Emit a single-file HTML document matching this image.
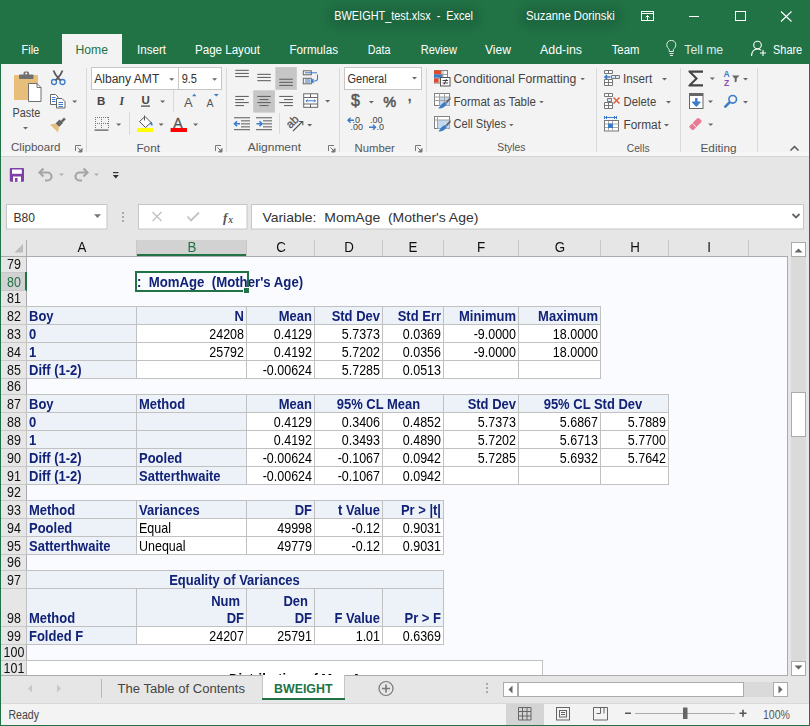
<!DOCTYPE html>
<html><head><meta charset="utf-8"><style>
html,body{margin:0;padding:0;}
body{width:810px;height:726px;position:relative;overflow:hidden;font-family:"Liberation Sans",sans-serif;background:#e6e6e6;}
body>div{position:absolute;box-sizing:content-box;}
.t{white-space:nowrap;line-height:15px;}
svg{position:absolute;left:0;top:0;}
.bg{position:absolute;left:0;top:0;}
</style></head><body>
<div style="left:1px;top:240px;width:787px;height:16px;background:#e6e6e6"></div>
<div style="left:1px;top:256px;width:787px;height:420px;background:#fafbfe"></div>
<div style="left:1px;top:256px;width:25px;height:420px;background:#e6e6e6"></div>
<div style="left:26px;top:240px;width:1px;height:436px;background:#ababab"></div>
<div style="left:1px;top:256px;width:787px;height:1px;background:#ababab"></div>
<div style="left:136px;top:240px;width:1px;height:16px;background:#c8c8c8"></div>
<div style="left:246px;top:240px;width:1px;height:16px;background:#c8c8c8"></div>
<div style="left:314px;top:240px;width:1px;height:16px;background:#c8c8c8"></div>
<div style="left:382px;top:240px;width:1px;height:16px;background:#c8c8c8"></div>
<div style="left:443px;top:240px;width:1px;height:16px;background:#c8c8c8"></div>
<div style="left:518px;top:240px;width:1px;height:16px;background:#c8c8c8"></div>
<div style="left:600px;top:240px;width:1px;height:16px;background:#c8c8c8"></div>
<div style="left:668px;top:240px;width:1px;height:16px;background:#c8c8c8"></div>
<div style="left:748px;top:240px;width:1px;height:16px;background:#c8c8c8"></div>
<div style="left:137px;top:240px;width:109px;height:16px;background:#d2d2d2"></div>
<div style="left:137px;top:254px;width:109px;height:2px;background:#217346"></div>
<div class="t" style="left:51.5px;width:60px;text-align:center;top:240.48px;font-size:14.5px;color:#111;font-weight:normal;transform-origin:50% 0;transform:scaleX(0.92)">A</div>
<div class="t" style="left:161.5px;width:60px;text-align:center;top:240.48px;font-size:14.5px;color:#217346;font-weight:normal;transform-origin:50% 0;transform:scaleX(0.92)">B</div>
<div class="t" style="left:250.5px;width:60px;text-align:center;top:240.48px;font-size:14.5px;color:#111;font-weight:normal;transform-origin:50% 0;transform:scaleX(0.92)">C</div>
<div class="t" style="left:318.5px;width:60px;text-align:center;top:240.48px;font-size:14.5px;color:#111;font-weight:normal;transform-origin:50% 0;transform:scaleX(0.92)">D</div>
<div class="t" style="left:383.0px;width:60px;text-align:center;top:240.48px;font-size:14.5px;color:#111;font-weight:normal;transform-origin:50% 0;transform:scaleX(0.92)">E</div>
<div class="t" style="left:451.0px;width:60px;text-align:center;top:240.48px;font-size:14.5px;color:#111;font-weight:normal;transform-origin:50% 0;transform:scaleX(0.92)">F</div>
<div class="t" style="left:529.5px;width:60px;text-align:center;top:240.48px;font-size:14.5px;color:#111;font-weight:normal;transform-origin:50% 0;transform:scaleX(0.92)">G</div>
<div class="t" style="left:604.5px;width:60px;text-align:center;top:240.48px;font-size:14.5px;color:#111;font-weight:normal;transform-origin:50% 0;transform:scaleX(0.92)">H</div>
<div class="t" style="left:678.5px;width:60px;text-align:center;top:240.48px;font-size:14.5px;color:#111;font-weight:normal;transform-origin:50% 0;transform:scaleX(0.92)">I</div>
<div style="left:1px;top:272px;width:25px;height:1px;background:#c8c8c8"></div>
<div class="t" style="left:-1.3000000000000007px;width:30px;text-align:center;top:256.98px;font-size:14.5px;color:#111;font-weight:normal;transform-origin:50% 0;transform:scaleX(0.86)">79</div>
<div style="left:1px;top:273px;width:25px;height:18px;background:#d2d2d2"></div>
<div style="left:25px;top:272px;width:2px;height:19px;background:#217346"></div>
<div style="left:1px;top:290px;width:25px;height:1px;background:#c8c8c8"></div>
<div class="t" style="left:-1.3000000000000007px;width:30px;text-align:center;top:274.98px;font-size:14.5px;color:#217346;font-weight:normal;transform-origin:50% 0;transform:scaleX(0.86)">80</div>
<div style="left:1px;top:306px;width:25px;height:1px;background:#c8c8c8"></div>
<div class="t" style="left:-1.3000000000000007px;width:30px;text-align:center;top:290.98px;font-size:14.5px;color:#111;font-weight:normal;transform-origin:50% 0;transform:scaleX(0.86)">81</div>
<div style="left:1px;top:324px;width:25px;height:1px;background:#c8c8c8"></div>
<div class="t" style="left:-1.3000000000000007px;width:30px;text-align:center;top:308.98px;font-size:14.5px;color:#111;font-weight:normal;transform-origin:50% 0;transform:scaleX(0.86)">82</div>
<div style="left:1px;top:342px;width:25px;height:1px;background:#c8c8c8"></div>
<div class="t" style="left:-1.3000000000000007px;width:30px;text-align:center;top:326.98px;font-size:14.5px;color:#111;font-weight:normal;transform-origin:50% 0;transform:scaleX(0.86)">83</div>
<div style="left:1px;top:360px;width:25px;height:1px;background:#c8c8c8"></div>
<div class="t" style="left:-1.3000000000000007px;width:30px;text-align:center;top:344.98px;font-size:14.5px;color:#111;font-weight:normal;transform-origin:50% 0;transform:scaleX(0.86)">84</div>
<div style="left:1px;top:378px;width:25px;height:1px;background:#c8c8c8"></div>
<div class="t" style="left:-1.3000000000000007px;width:30px;text-align:center;top:362.98px;font-size:14.5px;color:#111;font-weight:normal;transform-origin:50% 0;transform:scaleX(0.86)">85</div>
<div style="left:1px;top:394px;width:25px;height:1px;background:#c8c8c8"></div>
<div class="t" style="left:-1.3000000000000007px;width:30px;text-align:center;top:378.98px;font-size:14.5px;color:#111;font-weight:normal;transform-origin:50% 0;transform:scaleX(0.86)">86</div>
<div style="left:1px;top:412px;width:25px;height:1px;background:#c8c8c8"></div>
<div class="t" style="left:-1.3000000000000007px;width:30px;text-align:center;top:396.98px;font-size:14.5px;color:#111;font-weight:normal;transform-origin:50% 0;transform:scaleX(0.86)">87</div>
<div style="left:1px;top:430px;width:25px;height:1px;background:#c8c8c8"></div>
<div class="t" style="left:-1.3000000000000007px;width:30px;text-align:center;top:414.98px;font-size:14.5px;color:#111;font-weight:normal;transform-origin:50% 0;transform:scaleX(0.86)">88</div>
<div style="left:1px;top:448px;width:25px;height:1px;background:#c8c8c8"></div>
<div class="t" style="left:-1.3000000000000007px;width:30px;text-align:center;top:432.98px;font-size:14.5px;color:#111;font-weight:normal;transform-origin:50% 0;transform:scaleX(0.86)">89</div>
<div style="left:1px;top:466px;width:25px;height:1px;background:#c8c8c8"></div>
<div class="t" style="left:-1.3000000000000007px;width:30px;text-align:center;top:450.98px;font-size:14.5px;color:#111;font-weight:normal;transform-origin:50% 0;transform:scaleX(0.86)">90</div>
<div style="left:1px;top:484px;width:25px;height:1px;background:#c8c8c8"></div>
<div class="t" style="left:-1.3000000000000007px;width:30px;text-align:center;top:468.98px;font-size:14.5px;color:#111;font-weight:normal;transform-origin:50% 0;transform:scaleX(0.86)">91</div>
<div style="left:1px;top:500px;width:25px;height:1px;background:#c8c8c8"></div>
<div class="t" style="left:-1.3000000000000007px;width:30px;text-align:center;top:484.98px;font-size:14.5px;color:#111;font-weight:normal;transform-origin:50% 0;transform:scaleX(0.86)">92</div>
<div style="left:1px;top:518px;width:25px;height:1px;background:#c8c8c8"></div>
<div class="t" style="left:-1.3000000000000007px;width:30px;text-align:center;top:502.98px;font-size:14.5px;color:#111;font-weight:normal;transform-origin:50% 0;transform:scaleX(0.86)">93</div>
<div style="left:1px;top:536px;width:25px;height:1px;background:#c8c8c8"></div>
<div class="t" style="left:-1.3000000000000007px;width:30px;text-align:center;top:520.98px;font-size:14.5px;color:#111;font-weight:normal;transform-origin:50% 0;transform:scaleX(0.86)">94</div>
<div style="left:1px;top:554px;width:25px;height:1px;background:#c8c8c8"></div>
<div class="t" style="left:-1.3000000000000007px;width:30px;text-align:center;top:538.98px;font-size:14.5px;color:#111;font-weight:normal;transform-origin:50% 0;transform:scaleX(0.86)">95</div>
<div style="left:1px;top:570px;width:25px;height:1px;background:#c8c8c8"></div>
<div class="t" style="left:-1.3000000000000007px;width:30px;text-align:center;top:554.98px;font-size:14.5px;color:#111;font-weight:normal;transform-origin:50% 0;transform:scaleX(0.86)">96</div>
<div style="left:1px;top:588px;width:25px;height:1px;background:#c8c8c8"></div>
<div class="t" style="left:-1.3000000000000007px;width:30px;text-align:center;top:572.98px;font-size:14.5px;color:#111;font-weight:normal;transform-origin:50% 0;transform:scaleX(0.86)">97</div>
<div style="left:1px;top:626px;width:25px;height:1px;background:#c8c8c8"></div>
<div class="t" style="left:-1.3000000000000007px;width:30px;text-align:center;top:610.98px;font-size:14.5px;color:#111;font-weight:normal;transform-origin:50% 0;transform:scaleX(0.86)">98</div>
<div style="left:1px;top:644px;width:25px;height:1px;background:#c8c8c8"></div>
<div class="t" style="left:-1.3000000000000007px;width:30px;text-align:center;top:628.98px;font-size:14.5px;color:#111;font-weight:normal;transform-origin:50% 0;transform:scaleX(0.86)">99</div>
<div style="left:1px;top:660px;width:25px;height:1px;background:#c8c8c8"></div>
<div class="t" style="left:-1.3000000000000007px;width:30px;text-align:center;top:644.98px;font-size:14.5px;color:#111;font-weight:normal;transform-origin:50% 0;transform:scaleX(0.86)">100</div>
<div style="left:1px;top:676px;width:25px;height:1px;background:#c8c8c8"></div>
<div class="t" style="left:-1.3000000000000007px;width:30px;text-align:center;top:660.98px;font-size:14.5px;color:#111;font-weight:normal;transform-origin:50% 0;transform:scaleX(0.86)">101</div>
<div style="left:26px;top:306px;width:109px;height:17px;background:#edf2f9;border:1px solid #c1c1c1"></div>
<div class="t" style="left:29px;top:308.58px;font-size:14.2px;color:#112277;font-weight:bold;transform-origin:0 0;transform:scaleX(0.9154929577464789)">Boy</div>
<div style="left:136px;top:306px;width:109px;height:17px;background:#edf2f9;border:1px solid #c1c1c1"></div>
<div class="t" style="left:134px;width:110px;text-align:right;top:308.58px;font-size:14.2px;color:#112277;font-weight:bold;transform-origin:100% 0;transform:scaleX(0.9154929577464789)">N</div>
<div style="left:246px;top:306px;width:67px;height:17px;background:#edf2f9;border:1px solid #c1c1c1"></div>
<div class="t" style="left:244px;width:68px;text-align:right;top:308.58px;font-size:14.2px;color:#112277;font-weight:bold;transform-origin:100% 0;transform:scaleX(0.9154929577464789)">Mean</div>
<div style="left:314px;top:306px;width:67px;height:17px;background:#edf2f9;border:1px solid #c1c1c1"></div>
<div class="t" style="left:312px;width:68px;text-align:right;top:308.58px;font-size:14.2px;color:#112277;font-weight:bold;transform-origin:100% 0;transform:scaleX(0.9154929577464789)">Std Dev</div>
<div style="left:382px;top:306px;width:60px;height:17px;background:#edf2f9;border:1px solid #c1c1c1"></div>
<div class="t" style="left:380px;width:61px;text-align:right;top:308.58px;font-size:14.2px;color:#112277;font-weight:bold;transform-origin:100% 0;transform:scaleX(0.9154929577464789)">Std Err</div>
<div style="left:443px;top:306px;width:74px;height:17px;background:#edf2f9;border:1px solid #c1c1c1"></div>
<div class="t" style="left:441px;width:75px;text-align:right;top:308.58px;font-size:14.2px;color:#112277;font-weight:bold;transform-origin:100% 0;transform:scaleX(0.9154929577464789)">Minimum</div>
<div style="left:518px;top:306px;width:81px;height:17px;background:#edf2f9;border:1px solid #c1c1c1"></div>
<div class="t" style="left:516px;width:82px;text-align:right;top:308.58px;font-size:14.2px;color:#112277;font-weight:bold;transform-origin:100% 0;transform:scaleX(0.9154929577464789)">Maximum</div>
<div style="left:26px;top:324px;width:109px;height:17px;background:#edf2f9;border:1px solid #c1c1c1"></div>
<div class="t" style="left:29px;top:326.58px;font-size:14.2px;color:#112277;font-weight:bold;transform-origin:0 0;transform:scaleX(0.9154929577464789)">0</div>
<div style="left:136px;top:324px;width:109px;height:17px;background:#fff;border:1px solid #c1c1c1"></div>
<div class="t" style="left:134px;width:110px;text-align:right;top:326.58px;font-size:14.2px;color:#000;font-weight:normal;transform-origin:100% 0;transform:scaleX(0.8802816901408451)">24208</div>
<div style="left:246px;top:324px;width:67px;height:17px;background:#fff;border:1px solid #c1c1c1"></div>
<div class="t" style="left:244px;width:68px;text-align:right;top:326.58px;font-size:14.2px;color:#000;font-weight:normal;transform-origin:100% 0;transform:scaleX(0.8802816901408451)">0.4129</div>
<div style="left:314px;top:324px;width:67px;height:17px;background:#fff;border:1px solid #c1c1c1"></div>
<div class="t" style="left:312px;width:68px;text-align:right;top:326.58px;font-size:14.2px;color:#000;font-weight:normal;transform-origin:100% 0;transform:scaleX(0.8802816901408451)">5.7373</div>
<div style="left:382px;top:324px;width:60px;height:17px;background:#fff;border:1px solid #c1c1c1"></div>
<div class="t" style="left:380px;width:61px;text-align:right;top:326.58px;font-size:14.2px;color:#000;font-weight:normal;transform-origin:100% 0;transform:scaleX(0.8802816901408451)">0.0369</div>
<div style="left:443px;top:324px;width:74px;height:17px;background:#fff;border:1px solid #c1c1c1"></div>
<div class="t" style="left:441px;width:75px;text-align:right;top:326.58px;font-size:14.2px;color:#000;font-weight:normal;transform-origin:100% 0;transform:scaleX(0.8802816901408451)">-9.0000</div>
<div style="left:518px;top:324px;width:81px;height:17px;background:#fff;border:1px solid #c1c1c1"></div>
<div class="t" style="left:516px;width:82px;text-align:right;top:326.58px;font-size:14.2px;color:#000;font-weight:normal;transform-origin:100% 0;transform:scaleX(0.8802816901408451)">18.0000</div>
<div style="left:26px;top:342px;width:109px;height:17px;background:#edf2f9;border:1px solid #c1c1c1"></div>
<div class="t" style="left:29px;top:344.58px;font-size:14.2px;color:#112277;font-weight:bold;transform-origin:0 0;transform:scaleX(0.9154929577464789)">1</div>
<div style="left:136px;top:342px;width:109px;height:17px;background:#fff;border:1px solid #c1c1c1"></div>
<div class="t" style="left:134px;width:110px;text-align:right;top:344.58px;font-size:14.2px;color:#000;font-weight:normal;transform-origin:100% 0;transform:scaleX(0.8802816901408451)">25792</div>
<div style="left:246px;top:342px;width:67px;height:17px;background:#fff;border:1px solid #c1c1c1"></div>
<div class="t" style="left:244px;width:68px;text-align:right;top:344.58px;font-size:14.2px;color:#000;font-weight:normal;transform-origin:100% 0;transform:scaleX(0.8802816901408451)">0.4192</div>
<div style="left:314px;top:342px;width:67px;height:17px;background:#fff;border:1px solid #c1c1c1"></div>
<div class="t" style="left:312px;width:68px;text-align:right;top:344.58px;font-size:14.2px;color:#000;font-weight:normal;transform-origin:100% 0;transform:scaleX(0.8802816901408451)">5.7202</div>
<div style="left:382px;top:342px;width:60px;height:17px;background:#fff;border:1px solid #c1c1c1"></div>
<div class="t" style="left:380px;width:61px;text-align:right;top:344.58px;font-size:14.2px;color:#000;font-weight:normal;transform-origin:100% 0;transform:scaleX(0.8802816901408451)">0.0356</div>
<div style="left:443px;top:342px;width:74px;height:17px;background:#fff;border:1px solid #c1c1c1"></div>
<div class="t" style="left:441px;width:75px;text-align:right;top:344.58px;font-size:14.2px;color:#000;font-weight:normal;transform-origin:100% 0;transform:scaleX(0.8802816901408451)">-9.0000</div>
<div style="left:518px;top:342px;width:81px;height:17px;background:#fff;border:1px solid #c1c1c1"></div>
<div class="t" style="left:516px;width:82px;text-align:right;top:344.58px;font-size:14.2px;color:#000;font-weight:normal;transform-origin:100% 0;transform:scaleX(0.8802816901408451)">18.0000</div>
<div style="left:26px;top:360px;width:109px;height:17px;background:#edf2f9;border:1px solid #c1c1c1"></div>
<div class="t" style="left:29px;top:362.58px;font-size:14.2px;color:#112277;font-weight:bold;transform-origin:0 0;transform:scaleX(0.9154929577464789)">Diff (1-2)</div>
<div style="left:136px;top:360px;width:109px;height:17px;background:#fff;border:1px solid #c1c1c1"></div>
<div style="left:246px;top:360px;width:67px;height:17px;background:#fff;border:1px solid #c1c1c1"></div>
<div class="t" style="left:244px;width:68px;text-align:right;top:362.58px;font-size:14.2px;color:#000;font-weight:normal;transform-origin:100% 0;transform:scaleX(0.8802816901408451)">-0.00624</div>
<div style="left:314px;top:360px;width:67px;height:17px;background:#fff;border:1px solid #c1c1c1"></div>
<div class="t" style="left:312px;width:68px;text-align:right;top:362.58px;font-size:14.2px;color:#000;font-weight:normal;transform-origin:100% 0;transform:scaleX(0.8802816901408451)">5.7285</div>
<div style="left:382px;top:360px;width:60px;height:17px;background:#fff;border:1px solid #c1c1c1"></div>
<div class="t" style="left:380px;width:61px;text-align:right;top:362.58px;font-size:14.2px;color:#000;font-weight:normal;transform-origin:100% 0;transform:scaleX(0.8802816901408451)">0.0513</div>
<div style="left:443px;top:360px;width:74px;height:17px;background:#fff;border:1px solid #c1c1c1"></div>
<div style="left:518px;top:360px;width:81px;height:17px;background:#fff;border:1px solid #c1c1c1"></div>
<div style="left:26px;top:394px;width:109px;height:17px;background:#edf2f9;border:1px solid #c1c1c1"></div>
<div class="t" style="left:29px;top:396.58px;font-size:14.2px;color:#112277;font-weight:bold;transform-origin:0 0;transform:scaleX(0.9154929577464789)">Boy</div>
<div style="left:136px;top:394px;width:109px;height:17px;background:#edf2f9;border:1px solid #c1c1c1"></div>
<div class="t" style="left:139px;top:396.58px;font-size:14.2px;color:#112277;font-weight:bold;transform-origin:0 0;transform:scaleX(0.9154929577464789)">Method</div>
<div style="left:246px;top:394px;width:67px;height:17px;background:#edf2f9;border:1px solid #c1c1c1"></div>
<div class="t" style="left:244px;width:68px;text-align:right;top:396.58px;font-size:14.2px;color:#112277;font-weight:bold;transform-origin:100% 0;transform:scaleX(0.9154929577464789)">Mean</div>
<div style="left:314px;top:394px;width:128px;height:17px;background:#edf2f9;border:1px solid #c1c1c1"></div>
<div class="t" style="left:314.0px;width:129px;text-align:center;top:396.58px;font-size:14.2px;color:#112277;font-weight:bold;transform-origin:50% 0;transform:scaleX(0.9154929577464789)">95% CL Mean</div>
<div style="left:443px;top:394px;width:74px;height:17px;background:#edf2f9;border:1px solid #c1c1c1"></div>
<div class="t" style="left:441px;width:75px;text-align:right;top:396.58px;font-size:14.2px;color:#112277;font-weight:bold;transform-origin:100% 0;transform:scaleX(0.9154929577464789)">Std Dev</div>
<div style="left:518px;top:394px;width:149px;height:17px;background:#edf2f9;border:1px solid #c1c1c1"></div>
<div class="t" style="left:518.0px;width:150px;text-align:center;top:396.58px;font-size:14.2px;color:#112277;font-weight:bold;transform-origin:50% 0;transform:scaleX(0.9154929577464789)">95% CL Std Dev</div>
<div style="left:26px;top:412px;width:109px;height:17px;background:#edf2f9;border:1px solid #c1c1c1"></div>
<div class="t" style="left:29px;top:414.58px;font-size:14.2px;color:#112277;font-weight:bold;transform-origin:0 0;transform:scaleX(0.9154929577464789)">0</div>
<div style="left:136px;top:412px;width:109px;height:17px;background:#edf2f9;border:1px solid #c1c1c1"></div>
<div style="left:246px;top:412px;width:67px;height:17px;background:#fff;border:1px solid #c1c1c1"></div>
<div class="t" style="left:244px;width:68px;text-align:right;top:414.58px;font-size:14.2px;color:#000;font-weight:normal;transform-origin:100% 0;transform:scaleX(0.8802816901408451)">0.4129</div>
<div style="left:314px;top:412px;width:67px;height:17px;background:#fff;border:1px solid #c1c1c1"></div>
<div class="t" style="left:312px;width:68px;text-align:right;top:414.58px;font-size:14.2px;color:#000;font-weight:normal;transform-origin:100% 0;transform:scaleX(0.8802816901408451)">0.3406</div>
<div style="left:382px;top:412px;width:60px;height:17px;background:#fff;border:1px solid #c1c1c1"></div>
<div class="t" style="left:380px;width:61px;text-align:right;top:414.58px;font-size:14.2px;color:#000;font-weight:normal;transform-origin:100% 0;transform:scaleX(0.8802816901408451)">0.4852</div>
<div style="left:443px;top:412px;width:74px;height:17px;background:#fff;border:1px solid #c1c1c1"></div>
<div class="t" style="left:441px;width:75px;text-align:right;top:414.58px;font-size:14.2px;color:#000;font-weight:normal;transform-origin:100% 0;transform:scaleX(0.8802816901408451)">5.7373</div>
<div style="left:518px;top:412px;width:81px;height:17px;background:#fff;border:1px solid #c1c1c1"></div>
<div class="t" style="left:516px;width:82px;text-align:right;top:414.58px;font-size:14.2px;color:#000;font-weight:normal;transform-origin:100% 0;transform:scaleX(0.8802816901408451)">5.6867</div>
<div style="left:600px;top:412px;width:67px;height:17px;background:#fff;border:1px solid #c1c1c1"></div>
<div class="t" style="left:598px;width:68px;text-align:right;top:414.58px;font-size:14.2px;color:#000;font-weight:normal;transform-origin:100% 0;transform:scaleX(0.8802816901408451)">5.7889</div>
<div style="left:26px;top:430px;width:109px;height:17px;background:#edf2f9;border:1px solid #c1c1c1"></div>
<div class="t" style="left:29px;top:432.58px;font-size:14.2px;color:#112277;font-weight:bold;transform-origin:0 0;transform:scaleX(0.9154929577464789)">1</div>
<div style="left:136px;top:430px;width:109px;height:17px;background:#edf2f9;border:1px solid #c1c1c1"></div>
<div style="left:246px;top:430px;width:67px;height:17px;background:#fff;border:1px solid #c1c1c1"></div>
<div class="t" style="left:244px;width:68px;text-align:right;top:432.58px;font-size:14.2px;color:#000;font-weight:normal;transform-origin:100% 0;transform:scaleX(0.8802816901408451)">0.4192</div>
<div style="left:314px;top:430px;width:67px;height:17px;background:#fff;border:1px solid #c1c1c1"></div>
<div class="t" style="left:312px;width:68px;text-align:right;top:432.58px;font-size:14.2px;color:#000;font-weight:normal;transform-origin:100% 0;transform:scaleX(0.8802816901408451)">0.3493</div>
<div style="left:382px;top:430px;width:60px;height:17px;background:#fff;border:1px solid #c1c1c1"></div>
<div class="t" style="left:380px;width:61px;text-align:right;top:432.58px;font-size:14.2px;color:#000;font-weight:normal;transform-origin:100% 0;transform:scaleX(0.8802816901408451)">0.4890</div>
<div style="left:443px;top:430px;width:74px;height:17px;background:#fff;border:1px solid #c1c1c1"></div>
<div class="t" style="left:441px;width:75px;text-align:right;top:432.58px;font-size:14.2px;color:#000;font-weight:normal;transform-origin:100% 0;transform:scaleX(0.8802816901408451)">5.7202</div>
<div style="left:518px;top:430px;width:81px;height:17px;background:#fff;border:1px solid #c1c1c1"></div>
<div class="t" style="left:516px;width:82px;text-align:right;top:432.58px;font-size:14.2px;color:#000;font-weight:normal;transform-origin:100% 0;transform:scaleX(0.8802816901408451)">5.6713</div>
<div style="left:600px;top:430px;width:67px;height:17px;background:#fff;border:1px solid #c1c1c1"></div>
<div class="t" style="left:598px;width:68px;text-align:right;top:432.58px;font-size:14.2px;color:#000;font-weight:normal;transform-origin:100% 0;transform:scaleX(0.8802816901408451)">5.7700</div>
<div style="left:26px;top:448px;width:109px;height:17px;background:#edf2f9;border:1px solid #c1c1c1"></div>
<div class="t" style="left:29px;top:450.58px;font-size:14.2px;color:#112277;font-weight:bold;transform-origin:0 0;transform:scaleX(0.9154929577464789)">Diff (1-2)</div>
<div style="left:136px;top:448px;width:109px;height:17px;background:#edf2f9;border:1px solid #c1c1c1"></div>
<div class="t" style="left:139px;top:450.58px;font-size:14.2px;color:#112277;font-weight:bold;transform-origin:0 0;transform:scaleX(0.9154929577464789)">Pooled</div>
<div style="left:246px;top:448px;width:67px;height:17px;background:#fff;border:1px solid #c1c1c1"></div>
<div class="t" style="left:244px;width:68px;text-align:right;top:450.58px;font-size:14.2px;color:#000;font-weight:normal;transform-origin:100% 0;transform:scaleX(0.8802816901408451)">-0.00624</div>
<div style="left:314px;top:448px;width:67px;height:17px;background:#fff;border:1px solid #c1c1c1"></div>
<div class="t" style="left:312px;width:68px;text-align:right;top:450.58px;font-size:14.2px;color:#000;font-weight:normal;transform-origin:100% 0;transform:scaleX(0.8802816901408451)">-0.1067</div>
<div style="left:382px;top:448px;width:60px;height:17px;background:#fff;border:1px solid #c1c1c1"></div>
<div class="t" style="left:380px;width:61px;text-align:right;top:450.58px;font-size:14.2px;color:#000;font-weight:normal;transform-origin:100% 0;transform:scaleX(0.8802816901408451)">0.0942</div>
<div style="left:443px;top:448px;width:74px;height:17px;background:#fff;border:1px solid #c1c1c1"></div>
<div class="t" style="left:441px;width:75px;text-align:right;top:450.58px;font-size:14.2px;color:#000;font-weight:normal;transform-origin:100% 0;transform:scaleX(0.8802816901408451)">5.7285</div>
<div style="left:518px;top:448px;width:81px;height:17px;background:#fff;border:1px solid #c1c1c1"></div>
<div class="t" style="left:516px;width:82px;text-align:right;top:450.58px;font-size:14.2px;color:#000;font-weight:normal;transform-origin:100% 0;transform:scaleX(0.8802816901408451)">5.6932</div>
<div style="left:600px;top:448px;width:67px;height:17px;background:#fff;border:1px solid #c1c1c1"></div>
<div class="t" style="left:598px;width:68px;text-align:right;top:450.58px;font-size:14.2px;color:#000;font-weight:normal;transform-origin:100% 0;transform:scaleX(0.8802816901408451)">5.7642</div>
<div style="left:26px;top:466px;width:109px;height:17px;background:#edf2f9;border:1px solid #c1c1c1"></div>
<div class="t" style="left:29px;top:468.58px;font-size:14.2px;color:#112277;font-weight:bold;transform-origin:0 0;transform:scaleX(0.9154929577464789)">Diff (1-2)</div>
<div style="left:136px;top:466px;width:109px;height:17px;background:#edf2f9;border:1px solid #c1c1c1"></div>
<div class="t" style="left:139px;top:468.58px;font-size:14.2px;color:#112277;font-weight:bold;transform-origin:0 0;transform:scaleX(0.9154929577464789)">Satterthwaite</div>
<div style="left:246px;top:466px;width:67px;height:17px;background:#fff;border:1px solid #c1c1c1"></div>
<div class="t" style="left:244px;width:68px;text-align:right;top:468.58px;font-size:14.2px;color:#000;font-weight:normal;transform-origin:100% 0;transform:scaleX(0.8802816901408451)">-0.00624</div>
<div style="left:314px;top:466px;width:67px;height:17px;background:#fff;border:1px solid #c1c1c1"></div>
<div class="t" style="left:312px;width:68px;text-align:right;top:468.58px;font-size:14.2px;color:#000;font-weight:normal;transform-origin:100% 0;transform:scaleX(0.8802816901408451)">-0.1067</div>
<div style="left:382px;top:466px;width:60px;height:17px;background:#fff;border:1px solid #c1c1c1"></div>
<div class="t" style="left:380px;width:61px;text-align:right;top:468.58px;font-size:14.2px;color:#000;font-weight:normal;transform-origin:100% 0;transform:scaleX(0.8802816901408451)">0.0942</div>
<div style="left:443px;top:466px;width:74px;height:17px;background:#fff;border:1px solid #c1c1c1"></div>
<div style="left:518px;top:466px;width:81px;height:17px;background:#fff;border:1px solid #c1c1c1"></div>
<div style="left:600px;top:466px;width:67px;height:17px;background:#fff;border:1px solid #c1c1c1"></div>
<div style="left:26px;top:500px;width:109px;height:17px;background:#edf2f9;border:1px solid #c1c1c1"></div>
<div class="t" style="left:29px;top:502.58px;font-size:14.2px;color:#112277;font-weight:bold;transform-origin:0 0;transform:scaleX(0.9154929577464789)">Method</div>
<div style="left:136px;top:500px;width:109px;height:17px;background:#edf2f9;border:1px solid #c1c1c1"></div>
<div class="t" style="left:139px;top:502.58px;font-size:14.2px;color:#112277;font-weight:bold;transform-origin:0 0;transform:scaleX(0.9154929577464789)">Variances</div>
<div style="left:246px;top:500px;width:67px;height:17px;background:#edf2f9;border:1px solid #c1c1c1"></div>
<div class="t" style="left:244px;width:68px;text-align:right;top:502.58px;font-size:14.2px;color:#112277;font-weight:bold;transform-origin:100% 0;transform:scaleX(0.9154929577464789)">DF</div>
<div style="left:314px;top:500px;width:67px;height:17px;background:#edf2f9;border:1px solid #c1c1c1"></div>
<div class="t" style="left:312px;width:68px;text-align:right;top:502.58px;font-size:14.2px;color:#112277;font-weight:bold;transform-origin:100% 0;transform:scaleX(0.9154929577464789)">t Value</div>
<div style="left:382px;top:500px;width:60px;height:17px;background:#edf2f9;border:1px solid #c1c1c1"></div>
<div class="t" style="left:380px;width:61px;text-align:right;top:502.58px;font-size:14.2px;color:#112277;font-weight:bold;transform-origin:100% 0;transform:scaleX(0.9154929577464789)">Pr &gt; |t|</div>
<div style="left:26px;top:518px;width:109px;height:17px;background:#edf2f9;border:1px solid #c1c1c1"></div>
<div class="t" style="left:29px;top:520.58px;font-size:14.2px;color:#112277;font-weight:bold;transform-origin:0 0;transform:scaleX(0.9154929577464789)">Pooled</div>
<div style="left:136px;top:518px;width:109px;height:17px;background:#fff;border:1px solid #c1c1c1"></div>
<div class="t" style="left:139px;top:520.58px;font-size:14.2px;color:#000;font-weight:normal;transform-origin:0 0;transform:scaleX(0.8802816901408451)">Equal</div>
<div style="left:246px;top:518px;width:67px;height:17px;background:#fff;border:1px solid #c1c1c1"></div>
<div class="t" style="left:244px;width:68px;text-align:right;top:520.58px;font-size:14.2px;color:#000;font-weight:normal;transform-origin:100% 0;transform:scaleX(0.8802816901408451)">49998</div>
<div style="left:314px;top:518px;width:67px;height:17px;background:#fff;border:1px solid #c1c1c1"></div>
<div class="t" style="left:312px;width:68px;text-align:right;top:520.58px;font-size:14.2px;color:#000;font-weight:normal;transform-origin:100% 0;transform:scaleX(0.8802816901408451)">-0.12</div>
<div style="left:382px;top:518px;width:60px;height:17px;background:#fff;border:1px solid #c1c1c1"></div>
<div class="t" style="left:380px;width:61px;text-align:right;top:520.58px;font-size:14.2px;color:#000;font-weight:normal;transform-origin:100% 0;transform:scaleX(0.8802816901408451)">0.9031</div>
<div style="left:26px;top:536px;width:109px;height:17px;background:#edf2f9;border:1px solid #c1c1c1"></div>
<div class="t" style="left:29px;top:538.58px;font-size:14.2px;color:#112277;font-weight:bold;transform-origin:0 0;transform:scaleX(0.9154929577464789)">Satterthwaite</div>
<div style="left:136px;top:536px;width:109px;height:17px;background:#fff;border:1px solid #c1c1c1"></div>
<div class="t" style="left:139px;top:538.58px;font-size:14.2px;color:#000;font-weight:normal;transform-origin:0 0;transform:scaleX(0.8802816901408451)">Unequal</div>
<div style="left:246px;top:536px;width:67px;height:17px;background:#fff;border:1px solid #c1c1c1"></div>
<div class="t" style="left:244px;width:68px;text-align:right;top:538.58px;font-size:14.2px;color:#000;font-weight:normal;transform-origin:100% 0;transform:scaleX(0.8802816901408451)">49779</div>
<div style="left:314px;top:536px;width:67px;height:17px;background:#fff;border:1px solid #c1c1c1"></div>
<div class="t" style="left:312px;width:68px;text-align:right;top:538.58px;font-size:14.2px;color:#000;font-weight:normal;transform-origin:100% 0;transform:scaleX(0.8802816901408451)">-0.12</div>
<div style="left:382px;top:536px;width:60px;height:17px;background:#fff;border:1px solid #c1c1c1"></div>
<div class="t" style="left:380px;width:61px;text-align:right;top:538.58px;font-size:14.2px;color:#000;font-weight:normal;transform-origin:100% 0;transform:scaleX(0.8802816901408451)">0.9031</div>
<div style="left:26px;top:570px;width:416px;height:17px;background:#edf2f9;border:1px solid #c1c1c1"></div>
<div class="t" style="left:26.0px;width:417px;text-align:center;top:572.58px;font-size:14.2px;color:#112277;font-weight:bold;transform-origin:50% 0;transform:scaleX(0.9154929577464789)">Equality of Variances</div>
<div style="left:26px;top:588px;width:109px;height:37px;background:#edf2f9;border:1px solid #c1c1c1"></div>
<div class="t" style="left:29px;top:610.58px;font-size:14.2px;color:#112277;font-weight:bold;transform-origin:0 0;transform:scaleX(0.9154929577464789)">Method</div>
<div style="left:136px;top:588px;width:109px;height:37px;background:#edf2f9;border:1px solid #c1c1c1"></div>
<div class="t" style="left:134px;width:110px;text-align:right;top:610.58px;font-size:14.2px;color:#112277;font-weight:bold;transform-origin:100% 0;transform:scaleX(0.9154929577464789)">DF</div>
<div class="t" style="left:139.5px;width:100px;text-align:right;top:593.88px;font-size:14.2px;color:#112277;font-weight:bold;transform-origin:100% 0;transform:scaleX(0.9154929577464789)">Num</div>
<div style="left:246px;top:588px;width:67px;height:37px;background:#edf2f9;border:1px solid #c1c1c1"></div>
<div class="t" style="left:244px;width:68px;text-align:right;top:610.58px;font-size:14.2px;color:#112277;font-weight:bold;transform-origin:100% 0;transform:scaleX(0.9154929577464789)">DF</div>
<div class="t" style="left:207.5px;width:100px;text-align:right;top:593.88px;font-size:14.2px;color:#112277;font-weight:bold;transform-origin:100% 0;transform:scaleX(0.9154929577464789)">Den</div>
<div style="left:314px;top:588px;width:67px;height:37px;background:#edf2f9;border:1px solid #c1c1c1"></div>
<div class="t" style="left:312px;width:68px;text-align:right;top:610.58px;font-size:14.2px;color:#112277;font-weight:bold;transform-origin:100% 0;transform:scaleX(0.9154929577464789)">F Value</div>
<div style="left:382px;top:588px;width:60px;height:37px;background:#edf2f9;border:1px solid #c1c1c1"></div>
<div class="t" style="left:380px;width:61px;text-align:right;top:610.58px;font-size:14.2px;color:#112277;font-weight:bold;transform-origin:100% 0;transform:scaleX(0.9154929577464789)">Pr &gt; F</div>
<div style="left:26px;top:626px;width:109px;height:17px;background:#edf2f9;border:1px solid #c1c1c1"></div>
<div class="t" style="left:29px;top:628.58px;font-size:14.2px;color:#112277;font-weight:bold;transform-origin:0 0;transform:scaleX(0.9154929577464789)">Folded F</div>
<div style="left:136px;top:626px;width:109px;height:17px;background:#fff;border:1px solid #c1c1c1"></div>
<div class="t" style="left:134px;width:110px;text-align:right;top:628.58px;font-size:14.2px;color:#000;font-weight:normal;transform-origin:100% 0;transform:scaleX(0.8802816901408451)">24207</div>
<div style="left:246px;top:626px;width:67px;height:17px;background:#fff;border:1px solid #c1c1c1"></div>
<div class="t" style="left:244px;width:68px;text-align:right;top:628.58px;font-size:14.2px;color:#000;font-weight:normal;transform-origin:100% 0;transform:scaleX(0.8802816901408451)">25791</div>
<div style="left:314px;top:626px;width:67px;height:17px;background:#fff;border:1px solid #c1c1c1"></div>
<div class="t" style="left:312px;width:68px;text-align:right;top:628.58px;font-size:14.2px;color:#000;font-weight:normal;transform-origin:100% 0;transform:scaleX(0.8802816901408451)">1.01</div>
<div style="left:382px;top:626px;width:60px;height:17px;background:#fff;border:1px solid #c1c1c1"></div>
<div class="t" style="left:380px;width:61px;text-align:right;top:628.58px;font-size:14.2px;color:#000;font-weight:normal;transform-origin:100% 0;transform:scaleX(0.8802816901408451)">0.6369</div>
<div style="left:26px;top:660px;width:515px;height:20px;background:#fff;border:1px solid #c1c1c1"></div>
<div class="t" style="left:229px;top:671.58px;font-size:14.2px;color:#000;font-weight:bold;transform-origin:0 0;transform:scaleX(0.9154929577464789)">Distribution of MomAge</div>
<div class="t" style="left:137px;top:274.58px;font-size:14.2px;color:#112277;font-weight:bold;transform-origin:0 0;transform:scaleX(0.93)">:&nbsp; MomAge&nbsp; (Mother's Age)</div>
<div style="left:135px;top:271px;width:110px;height:17px;border:2px solid #217346"></div>
<div style="left:243px;top:287px;width:5px;height:5px;background:#217346;border:1px solid #fff"></div>
<svg width="810" height="726" viewBox="0 0 810 726" font-family="Liberation Sans, sans-serif" style="position:absolute;left:0;top:0;pointer-events:none">
<rect x="0" y="0" width="810" height="64" fill="#217346"/>
<rect x="1" y="64" width="808" height="88" fill="#f3f3f3"/>
<rect x="1" y="152" width="808" height="4" fill="#f6f6f6"/>
<rect x="1" y="156" width="808" height="1" fill="#d4d4d4"/>
<rect x="1" y="157" width="808" height="83" fill="#e6e6e6"/>
<path d="M14.5 252.5h8.5v-8.5z" fill="#bcbcbc"/>
<rect x="62" y="34" width="60" height="30" fill="#f3f3f3"/>
<defs><filter id="bl" x="-20%" y="-50%" width="140%" height="200%"><feGaussianBlur stdDeviation="5"/></filter></defs>
<rect x="328" y="6" width="152" height="22" rx="8" fill="#000" opacity="0.10" filter="url(#bl)"/>
<rect x="520" y="6" width="102" height="22" rx="8" fill="#000" opacity="0.10" filter="url(#bl)"/>
<text x="334.3" y="20.4" font-size="12" fill="#fff" textLength="138.70" lengthAdjust="spacingAndGlyphs">BWEIGHT_test.xlsx&#160; - &#160;Excel</text>
<text x="526" y="20.4" font-size="12" fill="#fff" textLength="88.70" lengthAdjust="spacingAndGlyphs">Suzanne Dorinski</text>
<rect x="641.5" y="11.5" width="12" height="9" fill="none" stroke="#fff" stroke-width="1"/>
<path d="M642 13.5h11" stroke="#fff"/>
<path d="M647.5 20v-4.5M645.5 17.5l2-2 2 2" fill="none" stroke="#fff"/>
<path d="M689 16.5h10" stroke="#fff"/>
<rect x="735.5" y="11.5" width="10" height="9" fill="none" stroke="#fff"/>
<path d="M781 11.5l10.5 10M791.5 11.5l-10.5 10" stroke="#fff" stroke-width="1.1"/>
<text x="21.6" y="53.7" font-size="12" fill="#fff" textLength="17.60" lengthAdjust="spacingAndGlyphs">File</text>
<text x="75.6" y="53.7" font-size="12" fill="#217346" textLength="32.40" lengthAdjust="spacingAndGlyphs">Home</text>
<text x="137" y="53.7" font-size="12" fill="#fff" textLength="29.00" lengthAdjust="spacingAndGlyphs">Insert</text>
<text x="195" y="53.7" font-size="12" fill="#fff" textLength="65.00" lengthAdjust="spacingAndGlyphs">Page Layout</text>
<text x="289.4" y="53.7" font-size="12" fill="#fff" textLength="48.60" lengthAdjust="spacingAndGlyphs">Formulas</text>
<text x="367.7" y="53.7" font-size="12" fill="#fff" textLength="22.70" lengthAdjust="spacingAndGlyphs">Data</text>
<text x="420.7" y="53.7" font-size="12" fill="#fff" textLength="36.30" lengthAdjust="spacingAndGlyphs">Review</text>
<text x="485" y="53.7" font-size="12" fill="#fff" textLength="26.00" lengthAdjust="spacingAndGlyphs">View</text>
<text x="540" y="53.7" font-size="12" fill="#fff" textLength="42.00" lengthAdjust="spacingAndGlyphs">Add-ins</text>
<text x="611.7" y="53.7" font-size="12" fill="#fff" textLength="27.70" lengthAdjust="spacingAndGlyphs">Team</text>
<text x="684.3" y="53.7" font-size="12" fill="#dfe9e2" textLength="38.90" lengthAdjust="spacingAndGlyphs">Tell me</text>
<text x="773" y="53.7" font-size="12" fill="#fff" textLength="29.20" lengthAdjust="spacingAndGlyphs">Share</text>
<path d="M669.2 51.5v-2.2c-1.6-1.2-2.4-2.8-2.4-4.6 0-2.6 2-4.3 4.5-4.3s4.5 1.7 4.5 4.3c0 1.8-.8 3.4-2.4 4.6v2.2z" fill="none" stroke="#dfe9e2" stroke-width="1"/>
<path d="M669.5 53.5h4M670 55.5h3" stroke="#dfe9e2" stroke-width="1"/>
<circle cx="757.5" cy="45" r="3.8" fill="none" stroke="#fff" stroke-width="1.1"/>
<path d="M751.5 56c.3-4.5 2.8-7 6-7 1.5 0 2.6.4 3.5 1.1" fill="none" stroke="#fff" stroke-width="1.1"/>
<path d="M763 50v6M760 53h6" stroke="#fff" stroke-width="1.1"/>
<rect x="14" y="75" width="24" height="25" fill="#e7be7a"/>
<rect x="19" y="74.5" width="14.5" height="4.5" rx="1" fill="#707070"/>
<rect x="23.5" y="71.5" width="5.5" height="4" rx="1.5" fill="#707070"/>
<path d="M28.5 83.5h8.5l4 4v14h-12.5z" fill="#fff" stroke="#707070" stroke-width="1"/>
<path d="M37 83.5v4h4" fill="none" stroke="#707070" stroke-width="1"/>
<circle cx="26.2" cy="73.5" r="1" fill="#fff"/>
<text x="12.6" y="117" font-size="12" fill="#444" textLength="27.70" lengthAdjust="spacingAndGlyphs">Paste</text>
<path d="M23.0 127h5l-2.5 2.5z" fill="#666"/>
<circle cx="54" cy="82" r="2.5" fill="none" stroke="#3b7bc8" stroke-width="1.3"/>
<circle cx="62.5" cy="82" r="2.5" fill="none" stroke="#3b7bc8" stroke-width="1.3"/>
<path d="M53.5 70.5c1 3 2.5 5 4.8 7.5l-2.8 2.3M62.5 70.5c-1 3-2.5 5-4.8 7.5l2.8 2.3" fill="none" stroke="#5a5a5a" stroke-width="1.8"/>
<path d="M50.5 94.5h5l2.5 2.5v7.5h-7.5z" fill="#fff" stroke="#666" stroke-width="1"/>
<path d="M56.5 98.5h5.5l3 3v6.5h-8.5z" fill="#fff" stroke="#666" stroke-width="1"/>
<path d="M52 97.5h3.5M52 99.5h3.5M52 101.5h3.5M58.5 102.5h4.5M58.5 104.5h4.5M58.5 106.5h4.5" stroke="#3b7bc8" stroke-width="1"/>
<path d="M72.2 100.5h5l-2.5 2.5z" fill="#666"/>
<path d="M60.5 121l3.5-3.5 1.8 1.8-3.5 3.5z" fill="#666"/>
<path d="M55.5 123.5l4-4 3.5 3.5-4 4z" fill="#666"/>
<path d="M50 124.5l5.5-1 3.5 3.5-1 5.5z" fill="#e7be7a"/>
<text x="11" y="151.3" font-size="11.5" fill="#555" textLength="49.50" lengthAdjust="spacingAndGlyphs">Clipboard</text>
<path d="M75.5 151v-5.5h5.5" fill="none" stroke="#777" stroke-width="1"/>
<path d="M77.5 147.5l4 4M82 148.5v3.5h-3.5z" stroke="#777" fill="#777" stroke-width="1"/>
<rect x="86" y="68" width="1" height="84" fill="#d9d9d9"/>
<rect x="91.5" y="67.5" width="87" height="22" fill="#fff" stroke="#c6c6c6" stroke-width="1"/>
<rect x="178.5" y="67.5" width="43" height="22" fill="#fff" stroke="#c6c6c6" stroke-width="1"/>
<text x="94.2" y="82.8" font-size="12" fill="#333" textLength="65.10" lengthAdjust="spacingAndGlyphs">Albany AMT</text>
<text x="181.7" y="82.8" font-size="12" fill="#333" textLength="15.30" lengthAdjust="spacingAndGlyphs">9.5</text>
<path d="M169.2 78.3h5l-2.5 2.5z" fill="#666"/>
<path d="M212.1 78.3h5l-2.5 2.5z" fill="#666"/>
<text x="97" y="104.8" font-size="11.5" font-weight="bold" fill="#444">B</text>
<text x="119.5" y="104.8" font-size="11.5" font-style="italic" font-family="Liberation Serif" font-weight="bold" fill="#444">I</text>
<text x="141.5" y="104" font-size="11.5" font-weight="bold" fill="#444">U</text>
<rect x="141" y="105.5" width="9" height="1.2" fill="#444"/>
<path d="M160.1 100.4h5l-2.5 2.5z" fill="#666"/>
<rect x="173" y="90" width="1" height="22" fill="#d9d9d9"/>
<text x="184" y="106.7" font-size="13" fill="#555">A</text>
<path d="M192 96.3l2.25-2.5 2.25 2.5z" fill="#3b7bc8"/>
<text x="206.5" y="106.7" font-size="10.5" fill="#555">A</text>
<path d="M213.8 94h5l-2.5 2.5z" fill="#3b7bc8"/>
<path d="M95 117.5h14M95 123.5h14M95.5 117v12M101.5 117v12M108.5 117v12" stroke="#777" stroke-width="1" stroke-dasharray="1 1"/>
<rect x="94.5" y="129.5" width="14" height="1.2" fill="#555"/>
<path d="M116.2 123.4h5l-2.5 2.5z" fill="#666"/>
<rect x="129" y="112" width="1" height="23" fill="#d9d9d9"/>
<path d="M139.5 121.5l5.5-5 6 6-5.5 5z" fill="#fff" stroke="#555" stroke-width="1"/>
<path d="M144.5 115.5v5" stroke="#555"/>
<path d="M151 121.5c1.5 1 2 3 1.2 4.5-.8-1-1.8-1.5-2.5-2.5z" fill="#3b7bc8"/>
<rect x="137" y="128" width="16" height="4" fill="#ffff00"/>
<path d="M158.6 123.4h5l-2.5 2.5z" fill="#666"/>
<text x="173.3" y="127.7" font-size="14" fill="#555" stroke="#555" stroke-width="0.3">A</text>
<rect x="170.6" y="128" width="16.4" height="4" fill="#ff0000"/>
<path d="M193.1 123.4h5l-2.5 2.5z" fill="#666"/>
<text x="136.4" y="151.9" font-size="11.5" fill="#555" textLength="23.60" lengthAdjust="spacingAndGlyphs">Font</text>
<path d="M215.5 151v-5.5h5.5" fill="none" stroke="#777" stroke-width="1"/>
<path d="M217.5 147.5l4 4M222 148.5v3.5h-3.5z" stroke="#777" fill="#777" stroke-width="1"/>
<rect x="226" y="68" width="1" height="84" fill="#d9d9d9"/>
<rect x="275.3" y="67.1" width="21.5" height="22.7" fill="#c6c6c6"/>
<rect x="253.2" y="90.3" width="21.7" height="22.3" fill="#c6c6c6"/>
<rect x="235.2" y="69.8" width="13.600000000000023" height="1.1" fill="#666"/>
<rect x="235.2" y="72.9" width="13.600000000000023" height="1.1" fill="#666"/>
<rect x="235.2" y="76.0" width="13.600000000000023" height="1.1" fill="#666"/>
<rect x="257.3" y="73.8" width="13.5" height="1.1" fill="#666"/>
<rect x="257.3" y="76.9" width="13.5" height="1.1" fill="#666"/>
<rect x="257.3" y="80.1" width="13.5" height="1.1" fill="#666"/>
<rect x="279.2" y="78.7" width="13.699999999999989" height="1.1" fill="#666"/>
<rect x="279.2" y="81.8" width="13.699999999999989" height="1.1" fill="#666"/>
<rect x="279.2" y="84.9" width="13.699999999999989" height="1.1" fill="#666"/>
<rect x="303.3" y="70.8" width="8" height="4" fill="none" stroke="#666" stroke-width="1"/>
<rect x="303.3" y="78.3" width="8" height="5.5" fill="none" stroke="#666" stroke-width="1"/>
<path d="M305 72.8h12M305 80h5M305 82h5" stroke="#3b7bc8" stroke-width="1"/>
<path d="M317.5 74.5v4a2.5 2.5 0 0 1-2.5 2.5h-3M313.5 79l-2 2 2 2" fill="none" stroke="#3b7bc8" stroke-width="1.1"/>
<rect x="235.2" y="95.9" width="13.600000000000023" height="1.1" fill="#666"/>
<rect x="235.2" y="99.0" width="8.800000000000011" height="1.1" fill="#666"/>
<rect x="235.2" y="102.0" width="13.600000000000023" height="1.1" fill="#666"/>
<rect x="235.2" y="105.0" width="8.800000000000011" height="1.1" fill="#666"/>
<rect x="257.3" y="95.9" width="13.5" height="1.1" fill="#666"/>
<rect x="259.5" y="99.0" width="9.0" height="1.1" fill="#666"/>
<rect x="257.3" y="102.0" width="13.5" height="1.1" fill="#666"/>
<rect x="259.5" y="105.0" width="9.0" height="1.1" fill="#666"/>
<rect x="279.2" y="95.9" width="13.699999999999989" height="1.1" fill="#666"/>
<rect x="284" y="99.0" width="8.899999999999977" height="1.1" fill="#666"/>
<rect x="279.2" y="102.0" width="13.699999999999989" height="1.1" fill="#666"/>
<rect x="284" y="105.0" width="8.899999999999977" height="1.1" fill="#666"/>
<rect x="303.7" y="93.8" width="14" height="13.5" fill="#fff" stroke="#666" stroke-width="1"/>
<path d="M304 97.5h13.5M304 104h13.5M310.5 94v3.5M310.5 104v3.5" stroke="#666" stroke-width="1"/>
<path d="M306 100.8h9.5M307.5 99.3l-1.5 1.5 1.5 1.5M314 99.3l1.5 1.5-1.5 1.5" fill="none" stroke="#3b7bc8" stroke-width="1"/>
<path d="M325.1 100h5l-2.5 2.5z" fill="#666"/>
<rect x="234" y="117.2" width="16" height="1.1" fill="#666"/>
<rect x="241" y="120.3" width="9" height="1.1" fill="#666"/>
<rect x="241" y="123.3" width="9" height="1.1" fill="#666"/>
<rect x="241" y="126.3" width="9" height="1.1" fill="#666"/>
<rect x="234" y="129.1" width="16" height="1.1" fill="#666"/>
<path d="M234.5 123.8h5.5M237 121.3l-2.5 2.5 2.5 2.5" fill="none" stroke="#3b7bc8" stroke-width="1.6"/>
<rect x="256" y="117.2" width="16" height="1.1" fill="#666"/>
<rect x="263" y="120.3" width="9" height="1.1" fill="#666"/>
<rect x="263" y="123.3" width="9" height="1.1" fill="#666"/>
<rect x="263" y="126.3" width="9" height="1.1" fill="#666"/>
<rect x="256" y="129.1" width="16" height="1.1" fill="#666"/>
<path d="M256.5 123.8h5.5M259.5 121.3l2.5 2.5-2.5 2.5" fill="none" stroke="#3b7bc8" stroke-width="1.6"/>
<rect x="279" y="113" width="1" height="21" fill="#d9d9d9"/>
<text x="0" y="0" font-size="11.5" fill="#555" stroke="#555" stroke-width="0.3" transform="translate(290.5 129) rotate(-45)">ab</text>
<path d="M293 131l9.5-9.5M299 121.5h3.8v3.8" fill="none" stroke="#555" stroke-width="1.1"/>
<path d="M307.2 124h5l-2.5 2.5z" fill="#666"/>
<text x="247.8" y="151.3" font-size="11.5" fill="#555" textLength="53.20" lengthAdjust="spacingAndGlyphs">Alignment</text>
<path d="M328.5 151v-5.5h5.5" fill="none" stroke="#777" stroke-width="1"/>
<path d="M330.5 147.5l4 4M335 148.5v3.5h-3.5z" stroke="#777" fill="#777" stroke-width="1"/>
<rect x="339" y="68" width="1" height="84" fill="#d9d9d9"/>
<rect x="344.5" y="67.5" width="77" height="22" fill="#fff" stroke="#c6c6c6" stroke-width="1"/>
<text x="347.5" y="82.5" font-size="12" fill="#333" textLength="39.10" lengthAdjust="spacingAndGlyphs">General</text>
<path d="M412.0 77h5l-2.5 2.5z" fill="#666"/>
<text x="351" y="106" font-size="16" fill="#555" stroke="#555" stroke-width="0.5">$</text>
<path d="M368.9 101h5l-2.5 2.5z" fill="#666"/>
<text x="383.2" y="107" font-size="14.5" fill="#555" stroke="#555" stroke-width="0.5">%</text>
<text x="407.5" y="100.5" font-size="15" font-weight="bold" fill="#555">,</text>
<text x="352.5" y="122.5" font-size="9" fill="#444">.0</text>
<text x="350.5" y="130" font-size="9" fill="#444">.00</text>
<path d="M347.5 120.3h6.5M350.5 117.8l-2.5 2.5 2.5 2.5" fill="none" stroke="#3b7bc8" stroke-width="1.4"/>
<text x="370" y="122.5" font-size="9" fill="#444">.00</text>
<text x="376.5" y="130" font-size="9" fill="#444">.0</text>
<path d="M369 127.3h6.5M373 124.8l2.5 2.5-2.5 2.5" fill="none" stroke="#3b7bc8" stroke-width="1.4"/>
<text x="354.5" y="151.5" font-size="11.5" fill="#555" textLength="40.30" lengthAdjust="spacingAndGlyphs">Number</text>
<path d="M415.5 151v-5.5h5.5" fill="none" stroke="#777" stroke-width="1"/>
<path d="M417.5 147.5l4 4M422 148.5v3.5h-3.5z" stroke="#777" fill="#777" stroke-width="1"/>
<rect x="426" y="68" width="1" height="84" fill="#d9d9d9"/>
<rect x="434.5" y="70.5" width="13" height="12.5" fill="#fff" stroke="#808080" stroke-width="1"/>
<path d="M439 70.5v12.5M443 70.5v12.5M434.5 74.5h13M434.5 78.5h13" stroke="#a0a0a0" stroke-width="1"/>
<rect x="434" y="70.5" width="7.5" height="3.5" fill="#e0492c"/>
<rect x="434" y="74.5" width="8.5" height="3.2" fill="#3f7bc4"/>
<rect x="434" y="78.5" width="4.5" height="4" fill="#e0492c"/>
<rect x="440.5" y="77.5" width="9.5" height="8.5" fill="#fff" stroke="#555" stroke-width="1"/>
<path d="M442.5 80.5h5.5M442.5 83h5.5M446.5 79l-2.5 5.5" stroke="#333" stroke-width=".9"/>
<text x="453.5" y="82.9" font-size="12" fill="#444" textLength="122.90" lengthAdjust="spacingAndGlyphs">Conditional Formatting</text>
<path d="M580.35 78h4.5l-2.25 2.25z" fill="#666"/>
<rect x="434.5" y="93.5" width="15" height="12" fill="#fff" stroke="#808080" stroke-width="1"/>
<rect x="439.5" y="97" width="10" height="8.5" fill="#c5d9ee"/>
<path d="M439.5 93.5v12M444.5 93.5v12M434.5 97h15M434.5 100.5h15" stroke="#a0a0a0" stroke-width="1"/>
<path d="M450.5 96.5l-4.8 5.6 1.4 1.2 3.4-4z" fill="#666"/>
<path d="M445.5 102c-2.5.5-4 2-5 3.5-.6 1-1.2 2-2.3 2.8 3 .4 6-.4 8.6-4.4z" fill="#3b7bc8"/>
<text x="453.5" y="105.5" font-size="12" fill="#444" textLength="82.50" lengthAdjust="spacingAndGlyphs">Format as Table</text>
<path d="M539.25 101h4.5l-2.25 2.25z" fill="#666"/>
<rect x="434.5" y="116.5" width="15" height="12" fill="#fff" stroke="#808080" stroke-width="1"/>
<rect x="437.5" y="120" width="12" height="8.5" fill="#c5d9ee"/>
<path d="M437.5 116.5v12M434.5 120h15" stroke="#a0a0a0" stroke-width="1"/>
<path d="M450.5 119.5l-4.8 5.6 1.4 1.2 3.4-4z" fill="#666"/>
<path d="M445.5 125c-2.5.5-4 2-5 3.5-.6 1-1.2 2-2.3 2.8 3 .4 6-.4 8.6-4.4z" fill="#3b7bc8"/>
<text x="453.5" y="128.4" font-size="12" fill="#444" textLength="52.50" lengthAdjust="spacingAndGlyphs">Cell Styles</text>
<path d="M509.05 124h4.5l-2.25 2.25z" fill="#666"/>
<text x="497.3" y="151" font-size="11.5" fill="#555" textLength="28.20" lengthAdjust="spacingAndGlyphs">Styles</text>
<rect x="596" y="68" width="1" height="84" fill="#d9d9d9"/>
<path d="M604.5 70.5h8v3h-8zM608.5 70.5v3M604.5 79.5h8v6h-8zM604.5 82.5h8M608.5 79.5v6" fill="#fff" stroke="#777" stroke-width="1"/>
<path d="M611.5 75.5h8v3h-8zM615.5 75.5v3" fill="#dce7f4" stroke="#777" stroke-width="1"/>
<path d="M605 77h5.5M607 75l-2 2 2 2" fill="none" stroke="#3b7bc8" stroke-width="1.6"/>
<text x="623" y="82.5" font-size="12" fill="#444" textLength="29.20" lengthAdjust="spacingAndGlyphs">Insert</text>
<path d="M662.0 78h5l-2.5 2.5z" fill="#666"/>
<path d="M604.5 93.5h8v3h-8zM608.5 93.5v3M604.5 102.5h8v6h-8zM604.5 105.5h8M608.5 102.5v6" fill="#fff" stroke="#777" stroke-width="1"/>
<path d="M607.5 98.5h4v3h-4z" fill="#dce7f4" stroke="#777" stroke-width="1"/>
<path d="M613.5 97.5l6 6M619.5 97.5l-6 6" stroke="#e2603c" stroke-width="1.5"/>
<text x="623.5" y="105.7" font-size="12" fill="#444" textLength="32.70" lengthAdjust="spacingAndGlyphs">Delete</text>
<path d="M666.0 101h5l-2.5 2.5z" fill="#666"/>
<path d="M604.5 116v3M616.5 116v3M605 117.5h11M607 116l-1.5 1.5 1.5 1.5M614 116l1.5 1.5-1.5 1.5" fill="none" stroke="#3b7bc8" stroke-width="1"/>
<rect x="604.5" y="120.5" width="14" height="10.5" fill="#fff" stroke="#777" stroke-width="1"/>
<path d="M605 124h13.5M605 127.5h13.5M608.5 121v10M612.5 121v10" stroke="#aaa" stroke-width="1"/>
<rect x="608" y="123.5" width="5" height="4.5" fill="#3b7bc8"/>
<text x="623.5" y="128.8" font-size="12" fill="#444" textLength="37.50" lengthAdjust="spacingAndGlyphs">Format</text>
<path d="M664.0 124h5l-2.5 2.5z" fill="#666"/>
<text x="626.7" y="151.6" font-size="11.5" fill="#555" textLength="22.90" lengthAdjust="spacingAndGlyphs">Cells</text>
<rect x="680" y="68" width="1" height="84" fill="#d9d9d9"/>
<path d="M688.5 70.5h14.5v2.3h-10.8l5.8 5.7-5.8 5.7h10.8v2.3h-14.5v-1.6l6.6-6.4-6.6-6.4z" fill="#444"/>
<path d="M709.8 77.6h5l-2.5 2.5z" fill="#666"/>
<text x="723.5" y="77.3" font-size="8.5" font-weight="bold" fill="#3b7bc8">A</text>
<text x="724" y="86" font-size="8.5" font-weight="bold" fill="#8b4ab8">Z</text>
<path d="M732 75.5h7.5l-2.8 3v3l-2 1v-4z" fill="#666"/>
<path d="M743.0 78h5l-2.5 2.5z" fill="#666"/>
<rect x="689.5" y="93.5" width="13.5" height="15" fill="#fff" stroke="#666" stroke-width="1"/>
<rect x="689.5" y="93.5" width="13.5" height="2.5" fill="#666"/>
<path d="M696.3 98v7.5" stroke="#3b7bc8" stroke-width="2.4"/><path d="M692.3 102l4 4.5 4-4.5z" fill="#3b7bc8" stroke="#3b7bc8" stroke-width="1"/>
<path d="M708.0 100.6h5l-2.5 2.5z" fill="#666"/>
<circle cx="732.7" cy="99.3" r="3.8" fill="none" stroke="#3b7bc8" stroke-width="1.6"/>
<path d="M729.3 102.7l-4 4" stroke="#3b7bc8" stroke-width="2.6" stroke-linecap="round"/>
<path d="M743.0 101h5l-2.5 2.5z" fill="#666"/>
<path d="M690 125.5l7-7c.8-.8 1.7-.8 2.5 0l1.5 1.5c.8.8.8 1.7 0 2.5l-7 7c-.8.8-1.7.8-2.5 0l-1.5-1.5c-.8-.8-.8-1.7 0-2.5z" fill="#e87c93"/>
<path d="M692.3 123.2l4.3 4.3" stroke="#f3f3f3" stroke-width="1"/>
<path d="M708.2 123.4h5l-2.5 2.5z" fill="#666"/>
<text x="700.5" y="152" font-size="11.5" fill="#555" textLength="36.00" lengthAdjust="spacingAndGlyphs">Editing</text>
<rect x="757" y="68" width="1" height="84" fill="#d9d9d9"/>
<path d="M790.5 150.5l4-4 4 4" fill="none" stroke="#555" stroke-width="1.5"/>
<rect x="9.8" y="168" width="14.2" height="13.8" rx="1" fill="#7f3fa8"/>
<rect x="12" y="169.5" width="9.8" height="4.3" fill="#fff"/>
<rect x="13" y="176.5" width="8" height="5.3" fill="#fff"/>
<rect x="15" y="178" width="2.5" height="3.8" fill="#7f3fa8"/>
<path d="M40 172.5h7.5a4 4 0 0 1 0 8h-2.5" fill="none" stroke="#a6a6a6" stroke-width="2.2"/>
<path d="M43.5 168.5l-4 4 4 4" fill="none" stroke="#a6a6a6" stroke-width="2.2"/>
<path d="M59.0 173.5h5l-2.5 2.5z" fill="#b0b0b0"/>
<path d="M87 172.5h-7.5a4 4 0 0 0 0 8h2.5" fill="none" stroke="#a6a6a6" stroke-width="2.2"/>
<path d="M83.5 168.5l4 4-4 4" fill="none" stroke="#a6a6a6" stroke-width="2.2"/>
<path d="M94.0 173.5h5l-2.5 2.5z" fill="#b0b0b0"/>
<rect x="113" y="172" width="5.5" height="1.2" fill="#333"/>
<path d="M112.8 175h6l-3 3.5z" fill="#333"/>
<rect x="6.5" y="204.5" width="100.5" height="24.5" fill="#fff" stroke="#c6c6c6" stroke-width="1"/>
<text x="13.4" y="222" font-size="13" fill="#333" textLength="21.50" lengthAdjust="spacingAndGlyphs">B80</text>
<path d="M94 214.3h7l-3.5 3.7z" fill="#777"/>
<rect x="122" y="212" width="2" height="2" fill="#aaa"/><rect x="122" y="216" width="2" height="2" fill="#aaa"/><rect x="122" y="220" width="2" height="2" fill="#aaa"/>
<rect x="138.5" y="204.5" width="108.5" height="24.5" fill="#fff" stroke="#c6c6c6" stroke-width="1"/>
<path d="M152.5 212l9 9M161.5 212l-9 9" stroke="#c2c2c2" stroke-width="1.3"/>
<path d="M187.5 216.5l3.5 4 8-8" fill="none" stroke="#c2c2c2" stroke-width="1.8"/>
<text x="223" y="221.5" font-size="13" font-style="italic" font-weight="bold" font-family="Liberation Serif" fill="#555">f</text>
<text x="228.3" y="222.5" font-size="9.5" font-style="italic" font-weight="bold" font-family="Liberation Serif" fill="#555">x</text>
<rect x="251.5" y="204.5" width="552" height="24.5" fill="#fff" stroke="#c6c6c6" stroke-width="1"/>
<text x="262.4" y="222.2" font-size="13.5" fill="#333" textLength="216.00" lengthAdjust="spacingAndGlyphs">Variable:&#160; MomAge&#160; (Mother&#39;s Age)</text>
<path d="M792.5 214l3.5 3.5 3.5-3.5" fill="none" stroke="#666" stroke-width="1.8"/>
<rect x="788" y="240" width="21" height="436" fill="#e6e6e6"/>
<rect x="791" y="257" width="15" height="404" fill="#dadada"/>
<rect x="791.5" y="242.5" width="14" height="14" fill="#fff" stroke="#ababab" stroke-width="1"/>
<path d="M794.5 252.5h8l-4-4z" fill="#666"/>
<rect x="791.5" y="392.5" width="14" height="44" fill="#fff" stroke="#ababab" stroke-width="1"/>
<rect x="791.5" y="661.5" width="14" height="14" fill="#fff" stroke="#ababab" stroke-width="1"/>
<path d="M794.5 665.5h8l-4 4z" fill="#666"/>
<rect x="787" y="256" width="1" height="420" fill="#ababab"/>
<rect x="1" y="676" width="808" height="27" fill="#e6e6e6"/>
<rect x="1" y="675" width="787" height="1" fill="#ababab"/>
<path d="M32 684.5v8l-4-4z" fill="#c8c8c8"/>
<path d="M57 684.5v8l4-4z" fill="#c8c8c8"/>
<rect x="101" y="679" width="1" height="19" fill="#b8b8b8"/>
<text x="117.5" y="692.5" font-size="12.5" fill="#444" textLength="127.50" lengthAdjust="spacingAndGlyphs">The Table of Contents</text>
<rect x="262" y="675" width="83" height="25" fill="#fff"/>
<rect x="262" y="675" width="1" height="25" fill="#c6c6c6"/><rect x="344" y="675" width="1" height="25" fill="#c6c6c6"/>
<rect x="262" y="698" width="83" height="2" fill="#217346"/>
<text x="274" y="693" font-size="12.5" fill="#217346" font-weight="bold" textLength="58.50" lengthAdjust="spacingAndGlyphs">BWEIGHT</text>
<circle cx="386" cy="688.5" r="7" fill="none" stroke="#777" stroke-width="1.2"/>
<path d="M386 684.5v8M382 688.5h8" stroke="#777" stroke-width="1.6"/>
<rect x="486" y="683" width="2" height="2" fill="#aaa"/><rect x="486" y="687" width="2" height="2" fill="#aaa"/><rect x="486" y="691" width="2" height="2" fill="#aaa"/>
<rect x="503" y="682" width="285" height="15" fill="#dadada"/>
<rect x="503.5" y="682.5" width="14" height="14" fill="#fff" stroke="#ababab" stroke-width="1"/>
<path d="M512.5 685.5v8l-4-4z" fill="#666"/>
<rect x="518.5" y="682.5" width="225" height="14" fill="#fff" stroke="#ababab" stroke-width="1"/>
<rect x="773.5" y="682.5" width="14" height="14" fill="#fff" stroke="#ababab" stroke-width="1"/>
<path d="M778.5 685.5v8l4-4z" fill="#666"/>
<rect x="1" y="703" width="808" height="22" fill="#f3f3f3"/>
<rect x="1" y="703" width="808" height="1" fill="#d8d8d8"/>
<text x="8.5" y="718.5" font-size="12" fill="#444" textLength="30.50" lengthAdjust="spacingAndGlyphs">Ready</text>
<rect x="506" y="704" width="38" height="21" fill="#d4d4d4"/>
<path d="M518.5 707.5h12.5v12.5h-12.5zM522.5 707.5v12.5M527 707.5v12.5M518.5 711.5h12.5M518.5 716h12.5" fill="none" stroke="#666" stroke-width="1"/>
<rect x="556.5" y="707.5" width="13" height="12.5" fill="none" stroke="#666" stroke-width="1"/>
<rect x="559.5" y="710.5" width="7" height="6.5" fill="none" stroke="#666" stroke-width="1"/>
<path d="M561 712.5h4M561 714.5h4" stroke="#666" stroke-width="1"/>
<path d="M593.5 707.5h14v12.5h-14zM600.5 707.5v6h-4M604 707.5v6" fill="none" stroke="#666" stroke-width="1"/>
<rect x="625" y="712.5" width="6" height="1.5" fill="#555"/>
<rect x="635" y="713" width="100" height="1" fill="#aaa"/>
<rect x="683" y="707.5" width="4.5" height="11.5" fill="#666"/>
<path d="M739.5 713.3h7M743 709.8v7" stroke="#555" stroke-width="1.6"/>
<text x="763" y="718.5" font-size="12" fill="#555" textLength="27.00" lengthAdjust="spacingAndGlyphs">100%</text>
<rect x="0" y="64" width="1" height="662" fill="#217346"/>
<rect x="809" y="64" width="1" height="662" fill="#217346"/>
<rect x="0" y="725" width="810" height="1" fill="#217346"/>
</svg>
</body></html>
